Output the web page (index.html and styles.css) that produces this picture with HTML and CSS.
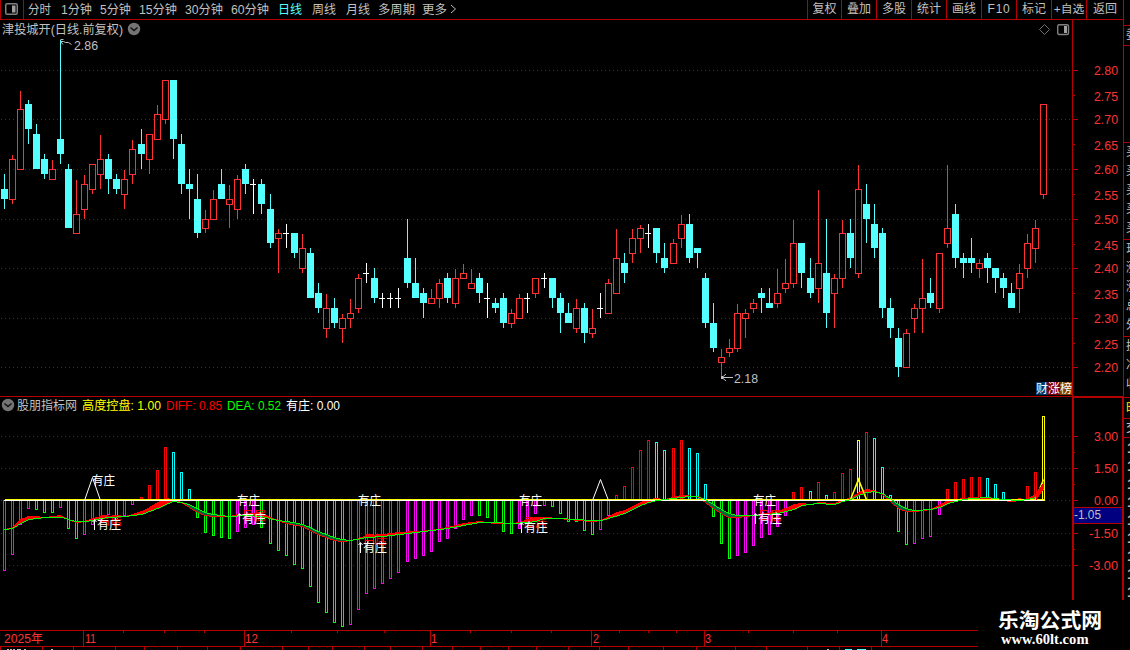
FILE: index.html
```html
<!DOCTYPE html>
<html lang="zh-CN">
<head>
<meta charset="utf-8">
<title>津投城开</title>
<link rel="stylesheet" href="styles.css">
</head>
<body>
<div class="terminal">
  <div class="workspace">
    <nav class="toolbar">
      <div class="panel-toggle">
        <svg width="13" height="12" viewBox="0 0 13 12"><rect x=".75" y=".75" width="11.5" height="10.5" rx="1.5" fill="none" stroke="#808080" stroke-width="1.5"/><rect x="7" y="2.5" width="3.5" height="7" fill="#a0a0a0"/></svg>
      </div>
      <div class="periods">
        <svg class="period-text" width="440" height="19" id="periods"></svg>
      </div>
      <div class="actions">
        <span class="w34">复权</span><span>叠加</span><span>多股</span><span>统计</span><span>画线</span><span class="f10">F10</span><span>标记</span><span class="tight">+自选</span><span class="last">返回</span>
      </div>
    </nav>
    <section class="price"><svg id="price" width="1123" height="376" viewBox="0 20 1123 376"></svg></section>
    <section class="indicator"><svg id="indicator" width="1123" height="234" viewBox="0 396 1123 234"></svg></section>
    <section class="timeline">
      <svg id="timeline" width="978" height="20" viewBox="0 630 978 20"></svg>
    </section>
  </div>
  <aside class="quote">
    <div class="q q-head"></div>
    <div class="q q-ratio">委</div>
    <div class="q q-blank"></div>
    <div class="q q-five"><span>买</span><span>买</span><span>买</span><span>买</span><span>买</span></div>
    <div class="q q-five"><span>现</span><span>涨</span><span>涨</span><span>总</span><span>外</span></div>
    <div class="q q-three"><span>换</span><span>净</span><span>收</span></div>
    <div class="q q-tab">时</div>
    <div class="q q-sub">交</div>
    <div class="q-ticks"><b>1</b><b>1</b><b>1</b><b>1</b><b>1</b><b>1</b><b>1</b><b>1</b><b>1</b></div>
  </aside>
  <div class="site"><div class="site-name">乐淘公式网</div><div class="site-url">www.60lt.com</div></div>
</div>
<script src="chart.js"></script>
</body>
</html>
```
FILE: styles.css
```css
* { box-sizing: border-box; }
body { margin: 0; background: #000; color: #c0c0c0; font: 12px "Liberation Sans", "Noto Sans CJK SC", sans-serif; }
.terminal { position: relative; width: 1130px; height: 650px; overflow: hidden; display: flex; background: #000; }
.workspace { width: 1123px; flex: none; display: flex; flex-direction: column; }
svg { display: block; }
svg text { font-family: "Liberation Sans", "Noto Sans CJK SC", sans-serif; font-size: 12.5px; }
.toolbar { height: 20px; flex: none; display: flex; border-bottom: 1px solid #b40000; }
.panel-toggle { width: 24px; padding: 3px 0 0 4px; border-left: 1px solid #b40000; border-right: 1px solid #b40000; }
.periods { width: 783px; }
.actions { display: flex; flex: 1; line-height: 18px; }
.actions span { width: 35px; flex: none; text-align: center; border-left: 1px solid #b40000; white-space: nowrap; }
.actions .w34 { width: 34px; }
.actions .last { width: 37px; }
.actions .tight { font-size: 11.8px; }
.actions .f10 { letter-spacing: .7px; }
.price { height: 376px; flex: none; }
.indicator { height: 234px; flex: none; }
.timeline { height: 20px; flex: none; width: 978px; }
.quote { width: 7px; flex: none; overflow: hidden; border-left: 1px solid #b40000; display: flex; flex-direction: column; height: 600px; }
.q { border-bottom: 1px solid #b40000; flex: none; padding-left: 2px; width: 24px; }
.q span, .q-ticks b { display: block; height: 19px; line-height: 19px; }
.q-head { height: 26px; }
.q-ratio { height: 20px; line-height: 19px; }
.q-blank { height: 97px; }
.q-five { height: 97px; }
.q-three { height: 61px; }
.q-tab { height: 21px; line-height: 20px; color: #ffff00; }
.q-sub { height: 19px; line-height: 18px; }
.q-ticks { width: 20px; padding-left: 3px; }
.q-ticks b { height: 18px; line-height: 20px; font-size: 15px; }
.site { position: absolute; left: 978px; top: 601px; width: 152px; height: 49px; background: #000; color: #fff; padding: 5px 0 0 20px; }
.site-name { font: bold 20.8px/27px "Noto Sans CJK SC", sans-serif; white-space: nowrap; }
.site-url { font: bold 14.6px/16px "Liberation Serif", serif; padding: 0 0 0 3px; margin-top: -2px; }
.grid { stroke: #a00000; stroke-dasharray: 1 3; fill: none; }
.frame { fill: #b40000; }
```
FILE: chart.js
```js
// Candles: colour, high, body top, body bottom, low (screen rows)
const candles = `c174 189 199 209|r155 159 200 204|r91 109 170 170|c100 104 129 144|c124 134 169 169|c154 159 174 179|r160 169 180 180|c40 139 154 164|c164 169 228 228|r180 214 234 234|r175 184 210 219|r164 164 190 194|r135 159 175 189|c154 159 179 194|c174 179 189 194|r170 179 195 209|r140 149 175 184|c129 144 154 169|r134 134 160 174|r105 114 140 140|r80 80 120 124|c80 80 139 159|c134 144 184 194|c169 184 189 219|c174 199 233 238|r210 219 229 233|r190 199 220 220|c169 184 199 199|r185 199 205 228|r175 179 210 219|c164 169 184 194|w179 184 185 214|c179 184 204 214|c194 209 243 248|r229 233 239 273|w224 233 234 248|c233 233 253 258|r234 248 269 273|c248 253 298 298|c283 293 308 313|r294 308 329 338|c298 308 323 328|r314 318 329 343|r299 313 319 328|r274 278 309 313|w263 273 274 283|c268 278 298 303|w293 298 299 308|w293 298 299 308|w288 298 299 308|c219 258 283 288|c258 283 298 298|c288 293 303 318|r289 298 304 304|r279 283 299 308|c273 278 298 303|r269 278 304 308|r264 273 279 279|r269 283 289 289|c273 278 293 303|w283 298 299 318|c298 303 308 313|c293 298 323 328|r309 313 324 328|r294 298 319 319|w293 298 299 313|r278 278 294 298|w273 278 279 288|c278 278 298 308|c293 298 313 333|c303 313 323 323|r299 308 329 333|c303 308 333 343|r309 328 334 338|w293 308 309 318|r279 283 314 314|r229 258 294 294|c253 263 273 283|r229 238 254 263|r225 228 239 253|w224 233 234 248|c228 228 253 263|c243 258 268 273|r239 243 264 264|r215 224 239 248|c214 224 258 263|c248 248 253 268|c273 278 323 328|c303 323 348 352|r349 357 363 378|r339 348 353 357|r304 313 349 352|r309 313 319 338|r299 303 309 313|c288 293 298 313|c288 303 308 308|r269 293 304 308|r259 283 289 293|r220 243 284 288|c243 243 273 288|c258 278 293 298|r190 263 289 303|c219 273 313 328|r274 278 294 328|r220 233 279 288|c219 233 258 268|r165 189 274 278|c184 204 219 243|c204 224 248 258|c228 233 308 318|c298 308 328 338|c328 338 367 377|r329 333 368 368|r304 308 319 333|r259 298 309 333|c278 293 303 308|r253 253 309 313|r165 228 244 248|c204 214 258 268|c253 258 263 278|c238 258 263 273|r259 263 269 278|c253 258 268 283|c268 268 278 293|c273 278 288 298|c283 293 308 308|r264 273 289 313|r234 243 269 278|r220 228 249 263|r104 104 195 199`.split('|');
// Histogram bars: colour and far end
const bars = 'm571 m555 m525 m509 g510 g513 g513 m508 g529 g539 m535 m525 m520 m515 g520 m516 m505 r497 r485 r470 r447 c452 c472 c489 g518 g533 g536 g538 g539 m532 m528 m525 g528 g544 g551 g556 g565 g569 g587 g603 g613 g623 g627 m625 m610 m594 m589 m584 m579 m573 m562 m559 m556 m552 m542 m539 m529 m520 m516 g516 g518 g523 g532 g534 m529 m520 m514 m506 g507 g514 g522 g522 g531 g535 m530 m516 r495 r486 r467 r450 r440 c442 c450 r448 r440 c448 c453 c484 g517 g544 g559 m556 m553 m546 m538 m535 m527 m516 r492 r487 c491 r482 c495 r492 r473 r469 y440 r432 c438 c467 c495 g532 g545 m544 m539 m537 m515 r489 r482 r479 r477 r477 c478 c484 c492 r502 r498 r486 r472 y416'.split(' ');
const dea = [[4,529],[12,528],[20,523],[28,519],[36,518],[44,517],[62,517],[68,519],[76,521],[84,521],[92,520],[100,518],[108,517],[124,516],[132,515],[141,514],[149,511],[157,508],[165,504],[173,501],[181,502],[189,504],[197,508],[205,512],[213,514],[229,516],[245,515],[261,516],[270,518],[278,520],[286,521],[294,522],[302,524],[310,527],[318,531],[326,534],[334,537],[342,539],[350,540],[366,537],[382,536],[399,534],[415,532],[431,530],[447,528],[463,525],[479,522],[495,522],[511,523],[527,522],[535,521],[544,518],[560,518],[576,519],[592,520],[600,520],[608,518],[624,513],[640,505],[648,502],[656,500],[672,498],[689,496],[697,496],[705,499],[713,504],[721,509],[729,513],[737,515],[753,515],[777,513],[793,509],[801,505],[818,503],[834,504],[842,501],[850,499],[858,495],[866,492],[874,491],[882,493],[890,498],[898,504],[906,508],[914,510],[930,509],[939,507],[947,503],[955,501],[963,499],[971,498],[987,497],[1003,499],[1019,500],[1027,499],[1035,497],[1043,489]];
const diff = [[4,529],[12,527],[20,519],[28,516],[36,516],[44,517],[60,515],[68,519],[76,522],[84,521],[92,518],[100,516],[124,516],[132,514],[141,511],[149,507],[157,502],[165,498],[173,499],[181,502],[189,507],[197,512],[205,515],[213,516],[229,516],[237,514],[261,513],[270,517],[286,523],[302,526],[310,530],[318,534],[326,537],[334,540],[342,541],[350,540],[358,538],[366,535],[382,534],[399,532],[415,531],[431,530],[447,527],[463,523],[479,521],[495,523],[511,523],[519,522],[527,519],[535,517],[544,517],[560,518],[568,519],[592,521],[600,520],[608,516],[616,512],[624,510],[632,506],[640,502],[648,499],[656,498],[664,499],[672,497],[681,495],[697,496],[705,502],[713,508],[721,513],[729,517],[737,517],[753,515],[777,511],[785,508],[793,504],[801,503],[810,504],[818,502],[834,503],[842,499],[850,498],[858,492],[866,489],[874,490],[882,494],[890,501],[898,508],[906,511],[914,511],[930,509],[939,505],[947,500],[955,499],[971,497],[987,498],[1003,500],[1011,501],[1019,500],[1027,498],[1035,494],[1043,482]];

const jumps = [17, 33, 50, 67, 83, 100, 116];
const xAt = i => 4 + 8 * i + jumps.filter(j => i >= j).length;
const rect = (x, y, w, h, f) => `<rect x="${x}" y="${y}" width="${w}" height="${h}" fill="${f}"/>`;
const box = (x, y, w, h, s) => `<rect x="${x + .5}" y="${y + .5}" width="${w - 1}" height="${h - 1}" fill="none" stroke="${s}"/>`;
const text = (x, y, w, s, f, size) => `<text x="${x}" y="${y}" textLength="${w}" lengthAdjust="spacingAndGlyphs" fill="${f}"${size ? ` style="font-size:${size}px"` : ''}>${s}</text>`;
const line = (pts, c) => `<polyline points="${pts.map(p => p[0] + .5 + ',' + (p[1] + .5)).join(' ')}" fill="none" stroke="${c}"/>`;
const RED = '#ff3232', AX = '#b40000';
const chevron = (x, y) => `<circle cx="${x}" cy="${y}" r="6.2" fill="#747474"/><path d="M${x - 3.5} ${y - 1.5}l3.5 3l3.5 -3" fill="none" stroke="#111" stroke-width="1.5"/>`;

// Toolbar periods; the group starts 24px into the bar
document.getElementById('periods').innerHTML =
  [['分时',28,23],['1分钟',61,31],['5分钟',100,31],['15分钟',139,38],['30分钟',185,38],['60分钟',231,38],['日线',278,24],['周线',312,24],['月线',346,24],['多周期',378,37],['更多',422,25]]
  .map(([s, x, w]) => text(x - 24, 13.5, w, s, s === '日线' ? '#54ffff' : '#c0c0c0')).join('') +
  '<path d="M427 5l4.5 4l-4.5 4" fill="none" stroke="#c0c0c0"/>';

let p = '';
const majors = [70, 119, 169, 219, 268, 318, 367], minors = [95, 144, 194, 244, 293, 343];
majors.forEach(y => p += `<path class="grid" d="M1 ${y + .5}H1072"/>` + rect(1072, y, 6, 1, AX));
minors.forEach(y => p += rect(1072, y, 3, 1, AX));
p += rect(1072, 20, 1, 376, AX);
[[75,'2.80'],[101,'2.75'],[124,'2.70'],[150,'2.65'],[174,'2.60'],[200,'2.55'],[224,'2.50'],[250,'2.45'],[273,'2.40'],[299,'2.35'],[323,'2.30'],[349,'2.25'],[372,'2.20']]
  .forEach(([y, s]) => p += text(1094, y, 24, s, RED));
candles.forEach((k, i) => {
  const [hi, top, bot, lo] = k.slice(1).split(' ').map(Number), x = xAt(i);
  if (k[0] === 'c') p += rect(x, hi, 1, lo - hi, '#54ffff') + rect(x - 3, top, 7, bot - top, '#54ffff');
  else if (k[0] === 'w') p += rect(x, hi, 1, lo - hi, '#fff') + rect(x - 3, top, 6, 1, '#fff');
  else p += rect(x, hi, 1, top - hi, RED) + rect(x, bot, 1, lo - bot, RED) + box(x - 3, top, 7, bot - top, RED);
});
p += text(2, 34, 121, '津投城开(日线.前复权)', '#c0c0c0') + chevron(134, 29);
p += '<path d="M1039.5 29.5l5 -5l5 5l-5 5z" fill="none" stroke="#707070"/>';
p += '<rect x="1057.7" y="24.7" width="10.8" height="9.8" rx="1.5" fill="none" stroke="#808080" stroke-width="1.4"/>' + rect(1064, 26, 3, 7, '#a0a0a0');
p += '<path d="M60.5 39.500h3M60.5 41.500h3l2 1h3l3 2M61 42l2 2.500M722 377.500h11M726 374l-4 3.500l4 3.500" fill="none" stroke="#c0c0c0"/>' + rect(721, 376, 2, 3, '#c0c0c0');
p += text(74, 50, 24, '2.86', '#c0c0c0') + text(734, 383, 24, '2.18', '#c0c0c0');
[['财', '#003468'], ['涨', '#780000'], ['榜', '#804000']].forEach(([s, f], i) => p += rect(1036 + i * 12, 382, 12, 13, f) + text(1036 + i * 12, 393, 12, s, '#fff'));
document.getElementById('price').innerHTML = p;

let q = '';
[436, 468, 500, 533, 565].forEach(y => q += `<path class="grid" d="M1 ${y + .5}H1072"/>` + rect(1072, y, 6, 1, AX));
[452, 484, 517, 549].forEach(y => q += rect(1072, y, 3, 1, AX));
q += rect(0, 396, 1123, 1, AX) + rect(1072, 396, 51, 2, AX) + rect(1072, 396, 2, 204, AX) + rect(1122, 396, 1, 204, AX);
const tone = { m: '#ff00ff', g: '#00ff00', r: '#ff0000', c: '#00ffff', y: '#ffff00' };
bars.forEach((b, i) => {
  const end = +b.slice(1), x = xAt(i) - 1;
  q += end > 500 ? box(x, 500, 3, end - 500, tone[b[0]]) : box(x, end, 3, 501 - end, tone[b[0]]);
});
// Band between the two averages, coloured by which one is above
const at = (a, x) => {
  for (let i = 1; i < a.length; i++) if (x <= a[i][0]) {
    const [x0, y0] = a[i - 1], [x1, y1] = a[i];
    return y0 + (y1 - y0) * (x - x0) / (x1 - x0);
  }
  return a[a.length - 1][1];
};
[[98, 525], [242, 520], [363, 544], [523, 527], [758, 520]].forEach(([x, y]) => q += text(x, y, 24, '吕居', '#ff0000'));
for (let x = 4; x <= 1043; x++) {
  const a = Math.round(at(diff, x)), b = Math.round(at(dea, x));
  if (a < b) q += rect(x, a, 1, b - a, '#ff0000');
  if (a > b) q += rect(x, b, 1, a - b, '#006838') + rect(x, a, 1, 1, '#ff0000');
}
q += rect(5, 499, 1039, 1, '#ffff00') + rect(4, 500, 1040, 1, '#fff');
q += line([[84,500],[92,477],[100,500]], '#fff') + line([[592,500],[600,479],[608,500]], '#fff');
q += '<path d="M850.5 499.500l8 -20l8 20M1035.5 499.500l8 -20" fill="none" stroke="#ff0" stroke-width="1.600"/>';
for (let x = 4; x <= 1043; x++) {
  const b = Math.round(at(dea, x));
  q += rect(x, b, 1, 1, '#00ff00');
  if (x > 1035) q += rect(x, Math.round(at(diff, x)), 1, 7, '#ff0000');
}
[[92,485],[237,505],[358,505],[519,505],[753,505]].forEach(([x, y]) => q += text(x, y, 23, '有庄', '#fff'));
[[93,529],[238,523],[359,552],[520,532],[754,523]].forEach(([x, y]) =>
  q += `<path d="M${x + 1.5} ${y + 1}v-10M${x - .5} ${y - 7}l2 -2.500l2 2.500" fill="none" stroke="#fff"/>` + text(x + 4, y, 24, '有庄', '#fff'));
q += chevron(8, 405) + text(17, 409.5, 60, '股朋指标网', '#c0c0c0') + text(82, 409.5, 79, '高度控盘: 1.00', '#ffff00') + text(166, 409.5, 56, 'DIFF: 0.85', '#ff0000', 12) + text(227, 409.5, 54, 'DEA: 0.52', '#00ff00', 12) + text(286, 409.5, 54, '有庄: 0.00', '#fff');
[[441,'3.00',1094],[473,'1.50',1094],[505,'0.00',1094],[538,'-1.50',1089],[570,'-3.00',1089]].forEach(([y, s, x]) => q += text(x, y, 1118 - x, s, RED));
q += rect(1074, 507, 48, 17, AX) + rect(1074, 508, 48, 15, '#000080') + text(1074, 519, 27, '-1.05', '#c0c0c0');
document.getElementById('indicator').innerHTML = q;

let t = rect(0, 630, 978, 1, AX) + rect(0, 646, 978, 1, AX);
[83, 244, 430, 591, 704, 881].forEach(x => t += rect(x, 630, 1, 16, AX));
[123,164,204,291,337,384,470,511,551,619,648,676,748,793,837].forEach(x => t += rect(x, 631, 1, 2, AX));
[0,42,73,115,144,177,207,240,282,308,332,364,390,422,452,480,508,536,568,599,628,663,696,735,766,807,839,871].forEach(x => t += rect(x, 647, 1, 3, AX));
[[4,'2025年',39],[85,'11',11],[245,'12',13],[431,'1',6],[593,'2',6],[705,'3',6],[882,'4',6]].forEach(([x, s, w]) => t += text(x, 643, w, s, RED));
[7,10,13,17,19,24,51,827].forEach(x => t += rect(x, 649, 2, 1, '#c0c0c0'));
t += rect(845, 649, 7, 1, '#54ffff') + rect(857, 649, 9, 1, '#54ffff');
document.getElementById('timeline').innerHTML = t;
```
